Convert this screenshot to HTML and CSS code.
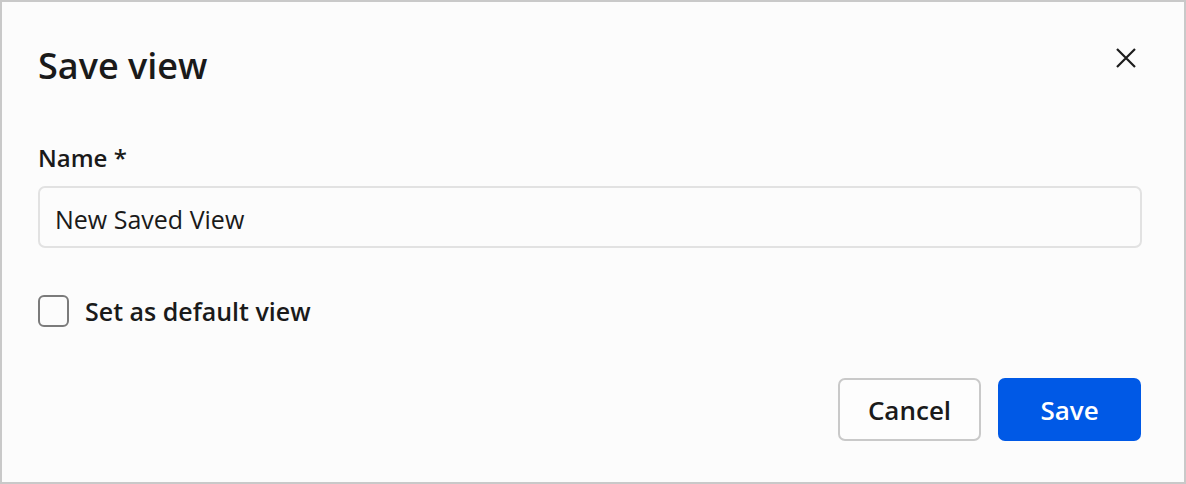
FILE: index.html
```html
<!DOCTYPE html>
<html lang="en">
<head>
<meta charset="utf-8">
<title>Save view</title>
<link rel="stylesheet" href="styles.css">
</head>
<body>
<div class="dialog">
  <div class="header">
    <h1 class="title">Save view</h1>
    <button class="close" aria-label="Close">
      <svg width="20" height="20" viewBox="0 0 20 20"><path d="M1 1 L19 19 M19 1 L1 19" stroke="#1c1c1c" stroke-width="2.2" fill="none"/></svg>
    </button>
  </div>
  <label class="label" for="name">Name *</label>
  <div class="input"><span class="input-text">New Saved View</span></div>
  <div class="check-row">
    <span class="checkbox"></span>
    <span class="check-label">Set as default view</span>
  </div>
  <div class="actions">
    <button class="btn btn-cancel">Cancel</button>
    <button class="btn btn-save">Save</button>
  </div>
</div>
</body>
</html>
```
FILE: styles.css
```css
html, body {
  margin: 0;
  padding: 0;
  background: #fcfcfc;
}
body {
  font-family: "Open Sans", "Noto Sans", sans-serif;
  color: #1a1a1a;
}
.dialog {
  box-sizing: border-box;
  width: 1186px;
  height: 484px;
  border: 2px solid #c9c9c9;
  background: #fcfcfc;
  padding: 40px 42px 0 36px;
  display: flex;
  flex-direction: column;
}
.header {
  display: flex;
  justify-content: space-between;
  align-items: flex-start;
  height: 46px;
}
.title {
  margin: 2px 0 0 0;
  font-size: 36px;
  line-height: 44px;
  font-weight: 600;
  letter-spacing: 0;
}
.close {
  width: 32px;
  height: 32px;
  padding: 0;
  border: none;
  background: transparent;
  display: flex;
  align-items: center;
  justify-content: center;
}
.label {
  margin-top: 54px;
  font-size: 24px;
  line-height: 32px;
  font-weight: 600;
}
.input {
  margin-top: 12px;
  box-sizing: border-box;
  height: 62px;
  border: 2px solid #e2e2e2;
  border-radius: 7px;
  background: #fcfcfc;
  display: flex;
  align-items: center;
  padding: 3px 0 0 15px;
}
.input-text {
  font-size: 25px;
  line-height: 32px;
  font-weight: 400;
}
.check-row {
  margin-top: 47px;
  display: flex;
  align-items: center;
  gap: 16px;
}
.checkbox {
  box-sizing: border-box;
  width: 31px;
  height: 32px;
  border: 2px solid #7b7b7b;
  border-radius: 6px;
  background: #fcfcfc;
}
.check-label {
  font-size: 25px;
  line-height: 32px;
  font-weight: 600;
}
.actions {
  margin-top: 51px;
  display: flex;
  justify-content: flex-end;
  gap: 17px;
  margin-right: 1px;
}
.btn {
  box-sizing: border-box;
  width: 143px;
  height: 63px;
  border-radius: 7px;
  font-family: "Open Sans", "Noto Sans", sans-serif;
  font-size: 26px;
  font-weight: 600;
  padding: 0;
  cursor: pointer;
}
.btn-cancel {
  background: #fdfdfd;
  border: 2px solid #c9c9c9;
  color: #1a1a1a;
}
.btn-save {
  background: #0059e6;
  border: none;
  color: #ffffff;
}
```
